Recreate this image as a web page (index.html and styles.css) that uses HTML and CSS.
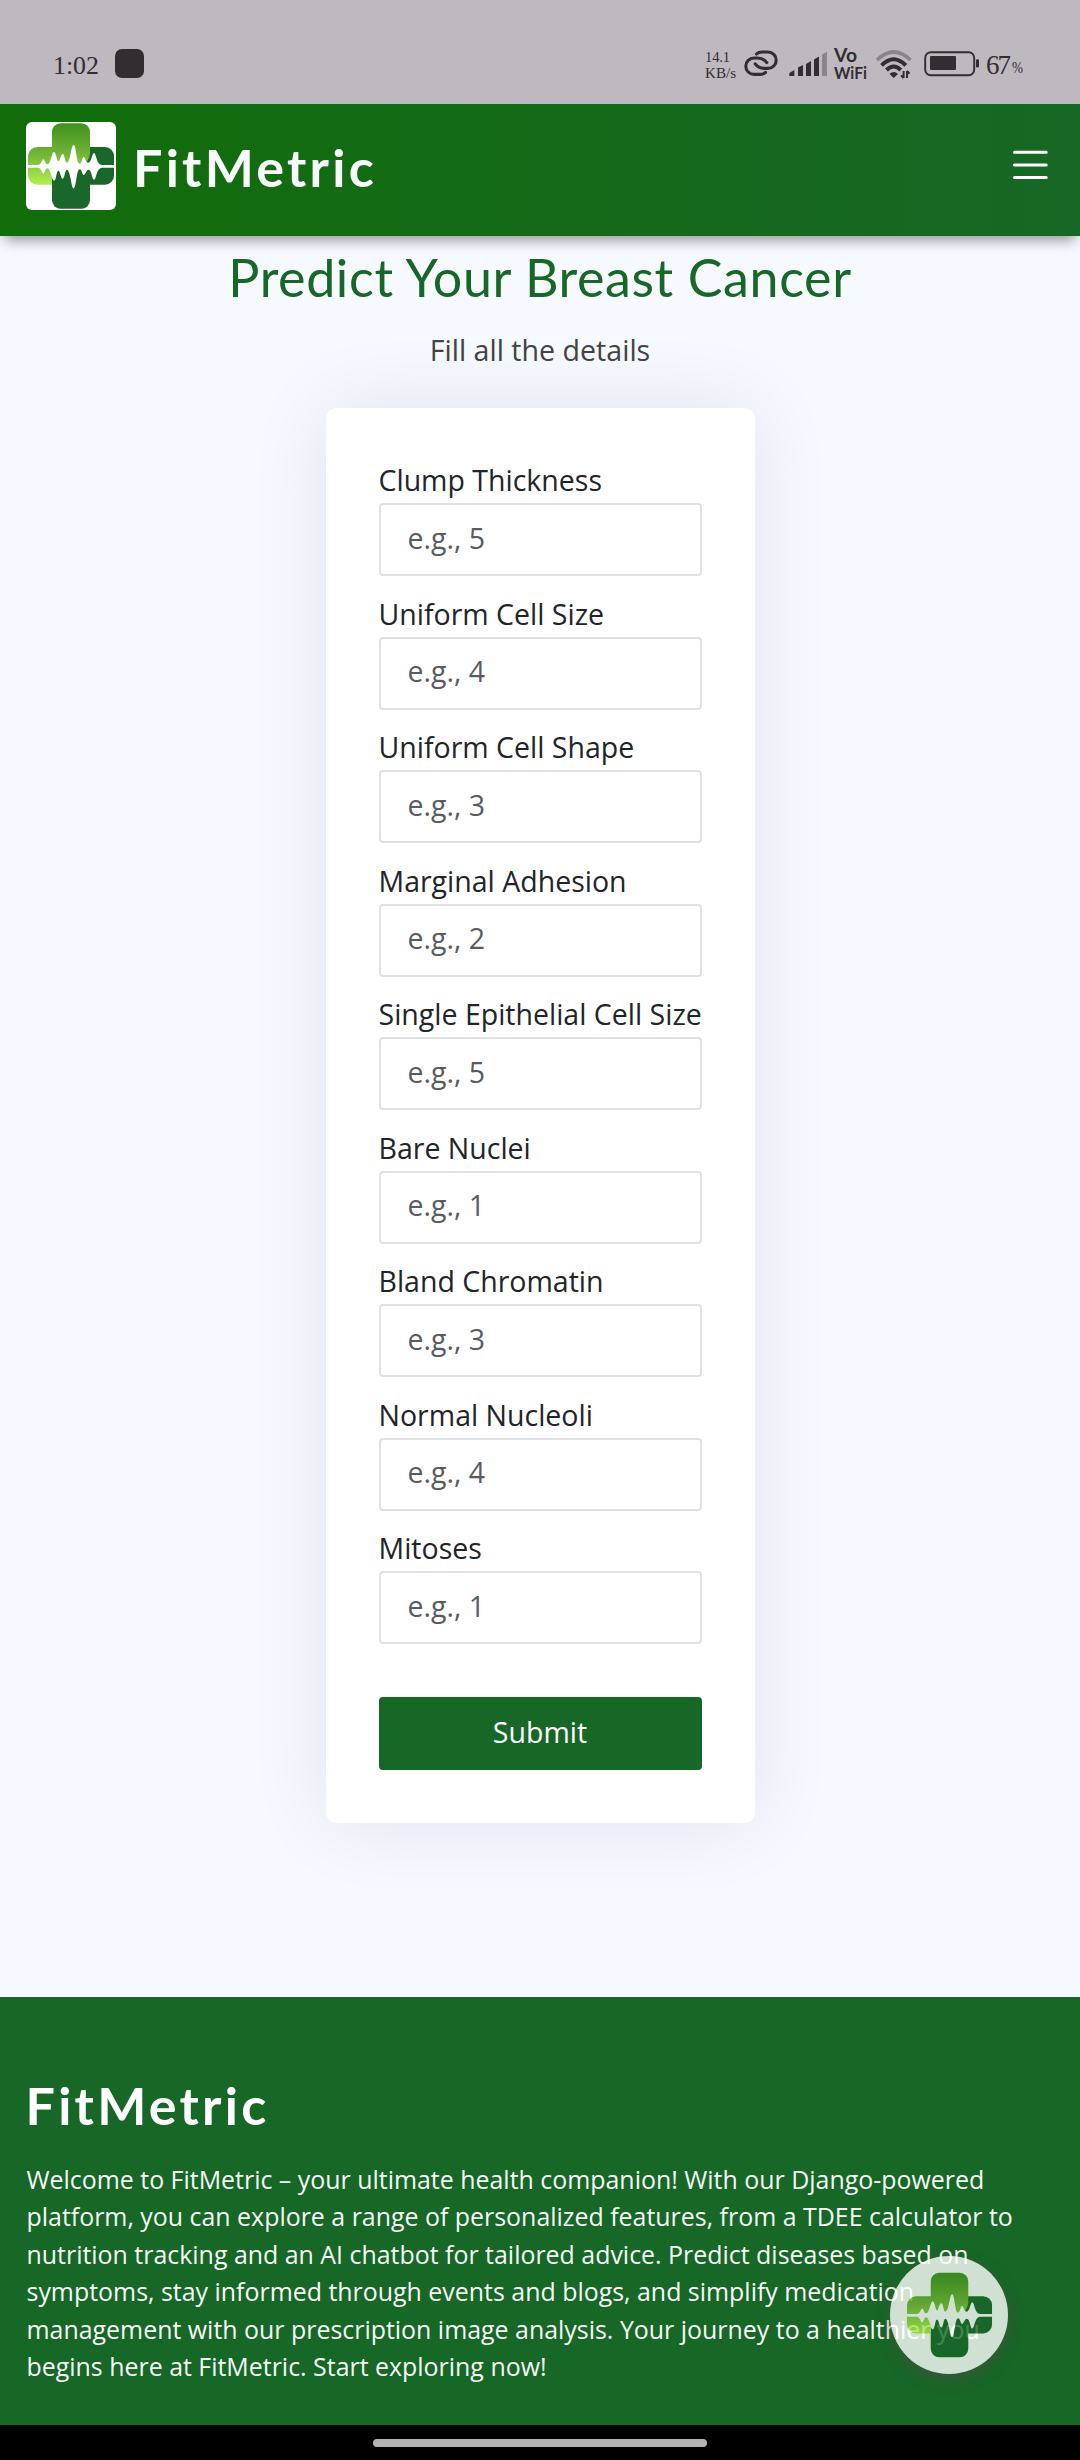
FILE: index.html
```html
<!DOCTYPE html>
<html lang="en">
<head>
<meta charset="utf-8">
<title>FitMetric</title>
<link rel="stylesheet" href="styles.css">
</head>
<body>
<svg class="defs" width="0" height="0" aria-hidden="true">
  <defs>
    <linearGradient id="leaf" gradientUnits="userSpaceOnUse" x1="0" y1="4" x2="0" y2="188">
      <stop offset="0" stop-color="#3f9120"/><stop offset=".5" stop-color="#72b436"/><stop offset="1" stop-color="#b2ef50"/>
    </linearGradient>
  </defs>
  <symbol id="logo" viewBox="0 0 270 264">
    <rect x="78" y="75" width="186" height="113" rx="27" fill="#196729"/>
    <path d="M78 130H192V234a26 26 0 0 1-26 26H104a26 26 0 0 1-26-26Z" fill="#196729"/>
    <path d="M104 4H166a26 26 0 0 1 26 26V96Q190 112 172 133H78V188H34a28 28 0 0 1-28-28V103a28 28 0 0 1 28-28H78V30a26 26 0 0 1 26-26Z" fill="url(#leaf)"/>
    <path d="M4 129H36C46 129 48 112 52 112S58 127 64 127C74 127 77 90 84 90S92 118 97 118 104 96 110 96 117 122 122 122C134 122 135 69 143 69S151 125 161 125C168 125 168 105 173 105S178 120 186 122C197 122 198 93 204 93 211 93 211 129 228 129H266V137H228C211 137 211 173 204 173 198 173 197 143 188 143 180 143 178 159 173 159S168 142 161 142C151 142 151 199 143 199S134 143 122 143C117 143 116 170 110 170S103 146 97 146 91 176 84 176C77 176 74 139 64 139 58 139 56 155 52 155S46 137 36 137H4Z" fill="#fff"/>
  </symbol>
</svg>

<div class="statusbar">
  <svg class="clock" width="48" height="30"><text x="0" y="24" font-size="25" textLength="46" lengthAdjust="spacingAndGlyphs">1:02</text></svg>
  <span class="app-dot"></span>
  <div class="indicators">
    <svg class="speed" width="31" height="32"><text x="0" y="13" font-size="14.5" textLength="25">14.1</text><text x="0" y="29" font-size="15" textLength="31" lengthAdjust="spacingAndGlyphs">KB/s</text></svg>
    <svg class="link" width="36" height="29" viewBox="0 0 36 29" fill="none" stroke="#312d31" stroke-width="3.1" stroke-linecap="round">
      <path d="M13.5 5Q15.5 3 19 3H25A8.2 8.2 0 0 1 25 19.4H22Q15.5 19.4 12.2 14.8"/>
      <path d="M22.5 23.4Q20.5 25.4 17 25.4H11A8.2 8.2 0 0 1 11 9H14Q20.5 9 23.8 13.6"/>
    </svg>
    <svg class="signal" width="38" height="26" fill="#312d31">
      <path d="M.3 25V22L5.3 19V25ZM9 25V16.5L14 14V25ZM17 25V13L22 10V25ZM25 25V8.5L30 5.5V25Z"/>
      <path d="M33 25V3.5L38 .8V25Z" fill="#8a858a"/>
    </svg>
    <svg class="vowifi" width="36" height="44"><text x="0" y="18" font-size="18" textLength="23" lengthAdjust="spacingAndGlyphs">Vo</text><text x="0" y="35" font-size="17.5" textLength="33" lengthAdjust="spacingAndGlyphs">WiFi</text></svg>
    <svg class="wifi" width="38" height="31" viewBox="0 0 38 31" fill="none" stroke="#312d31">
      <path d="M2 11Q18.7-5 35.5 11" stroke="#8a858a" stroke-width="3.6"/>
      <path d="M6.6 16.4Q18.7 4.2 30.8 16.4" stroke-width="4"/>
      <path d="M11.5 21Q18.7 14 25.8 21" stroke-width="4"/>
      <path d="M14.5 25Q18.7 21 23 25L18.7 29Z" fill="#312d31" stroke="none"/>
      <path d="M28.6 22V29M26 26.4L28.6 29M32 29V22M34.6 24.6L32 22" stroke-width="2"/>
    </svg>
    <svg class="battery" width="56" height="26" fill="#312d31">
      <rect x="1.2" y="1.2" width="49" height="23" rx="5.5" fill="none" stroke="#312d31" stroke-width="1.9"/>
      <rect x="6" y="5" width="26" height="14" rx="1"/><rect x="52" y="8.3" width="3" height="8.3" rx="1.3"/>
    </svg>
    <svg class="percent" width="40" height="40"><text x="0" y="28" font-size="27" textLength="25">67</text><text x="26" y="27" font-size="17" textLength="11" lengthAdjust="spacingAndGlyphs">%</text></svg>
  </div>
</div>

<header class="navbar">
  <div class="brand">
    <span class="brand-logo"><svg width="90" height="88"><use href="#logo"/></svg></span>
    <span class="brand-name">FitMetric</span>
  </div>
  <svg class="menu" width="35" height="30" stroke="#fff" stroke-width="3" stroke-linecap="round"><path d="M1.5 2.3H33.2M1.5 15H33.2M1.5 27.6H33.2"/></svg>
</header>

<main class="page">
  <h1 class="title">Predict Your Breast Cancer</h1>
  <p class="subtitle">Fill all the details</p>
  <form class="card">
    <label class="field"><span>Clump Thickness</span><input placeholder="e.g., 5"></label>
    <label class="field"><span>Uniform Cell Size</span><input placeholder="e.g., 4"></label>
    <label class="field"><span>Uniform Cell Shape</span><input placeholder="e.g., 3"></label>
    <label class="field"><span>Marginal Adhesion</span><input placeholder="e.g., 2"></label>
    <label class="field"><span>Single Epithelial Cell Size</span><input placeholder="e.g., 5"></label>
    <label class="field"><span>Bare Nuclei</span><input placeholder="e.g., 1"></label>
    <label class="field"><span>Bland Chromatin</span><input placeholder="e.g., 3"></label>
    <label class="field"><span>Normal Nucleoli</span><input placeholder="e.g., 4"></label>
    <label class="field"><span>Mitoses</span><input placeholder="e.g., 1"></label>
    <button class="submit" type="button">Submit</button>
  </form>
</main>

<footer class="footer">
  <h2 class="footer-name">FitMetric</h2>
  <p class="about">Welcome to FitMetric – your ultimate health companion! With our Django-powered<br>platform, you can explore a range of personalized features, from a TDEE calculator to<br>nutrition tracking and an AI chatbot for tailored advice. Predict diseases based on<br>symptoms, stay informed through events and blogs, and simplify medication<br>management with our prescription image analysis. Your journey to a healthier you<br>begins here at FitMetric. Start exploring now!</p>
  <div class="chat"><svg width="89" height="88"><use href="#logo"/></svg></div>
</footer>
<div class="gesture"><span></span></div>
</body>
</html>
```
FILE: styles.css
```css
* { box-sizing: border-box; }
body {
  margin: 0;
  width: 1080px;
  height: 2460px;
  overflow: hidden;
  display: flex;
  flex-direction: column;
  background: #f6f9ff;
  font-family: "Open Sans", sans-serif;
  color: #212529;
}
svg { display: block; flex: none; overflow: visible; }
.defs { position: absolute; }

.statusbar {
  height: 104px;
  flex: none;
  display: flex;
  align-items: flex-start;
  padding: 49px 54px 0 53px;
  background: #beb9be;
  font-family: "Liberation Serif", serif;
  fill: #312d31;
}
.clock { margin-top: 1px; }
.app-dot { width: 29px; height: 29px; margin-left: 14px; border-radius: 7px; background: #312d31; }
.indicators { display: flex; align-items: flex-start; margin-left: auto; }
.link { margin-left: 7px; }
.signal { margin: 2px 0 0 10px; }
.vowifi { margin: -5px 0 0 7px; font-family: Lato, sans-serif; font-weight: 700; }
.wifi { margin-left: 5px; }
.battery { margin: 2px 0 0 11px; }
.percent { margin: -3px 0 0 6px; }

.navbar {
  position: relative;
  z-index: 1;
  height: 132px;
  flex: none;
  display: flex;
  align-items: center;
  justify-content: space-between;
  padding: 0 32px 8px 26px;
  background: linear-gradient(90deg, #116d0a, #176726);
  box-shadow: 0 9px 13px -5px rgba(0, 0, 0, .42);
}
.brand { display: flex; align-items: center; gap: 17px; }
.brand-logo { border-radius: 6px; background: #fff; overflow: hidden; }
.brand-name, .footer-name {
  font-family: Lato, sans-serif;
  font-size: 52px;
  font-weight: 700;
  line-height: 64px;
  letter-spacing: 3.25px;
  color: #fff;
  margin: 0;
}
.brand-name { color: #f8f9fa; position: relative; top: 1px; }
.footer-name { margin-left: -1px; }
.menu { margin-top: -2px; }

.page { flex: none; height: 1761px; display: flex; flex-direction: column; align-items: center; }
.title {
  margin: 9px 0 0;
  font: 400 52px/64px Lato, sans-serif;
  letter-spacing: .6px;
  color: #176726;
}
.subtitle { margin: 21px 0 0; font-size: 28.6px; line-height: 40px; color: #444; }
.card {
  width: 429px;
  height: 1415px;
  margin-top: 38px;
  padding: 53px;
  border-radius: 11px;
  background: #fff;
  box-shadow: 0 0 82px rgba(0, 20, 60, .09);
}
.field { display: block; height: 133.5px; }
.field span { display: block; height: 42px; font-size: 28.5px; line-height: 39px; white-space: nowrap; }
.field input {
  display: block;
  width: 323px;
  height: 73px;
  padding: 0 27px 4px;
  border: 2px solid #dee2e6;
  border-radius: 4px;
  background: #fff;
  font: 28.5px "Open Sans", sans-serif;
}
.field input::placeholder { color: #595c5f; opacity: 1; }
.submit {
  display: block;
  width: 323px;
  height: 73px;
  margin-top: 34px;
  padding: 0 0 3px;
  border: 0;
  border-radius: 4px;
  background: #176726;
  color: #fff;
  font: 28.5px "Open Sans", sans-serif;
}

.footer { position: relative; flex: none; height: 428px; padding: 76px 26.5px 0; background: #176726; }
.about { margin: 24px 0 0; font-size: 24.93px; line-height: 37.4px; color: #f5faf6; white-space: nowrap; }
.chat {
  position: absolute;
  left: 890px;
  top: 259px;
  width: 118px;
  height: 118px;
  border-radius: 50%;
  display: grid;
  place-items: center;
  background: #fff;
  opacity: .8;
  box-shadow: 0 5px 14px rgba(90, 70, 80, .65);
}
.gesture { flex: none; height: 35px; background: #000; display: flex; justify-content: center; padding-top: 14px; }
.gesture span { width: 334px; height: 8px; border-radius: 4px; background: #b3b3b3; }
```
